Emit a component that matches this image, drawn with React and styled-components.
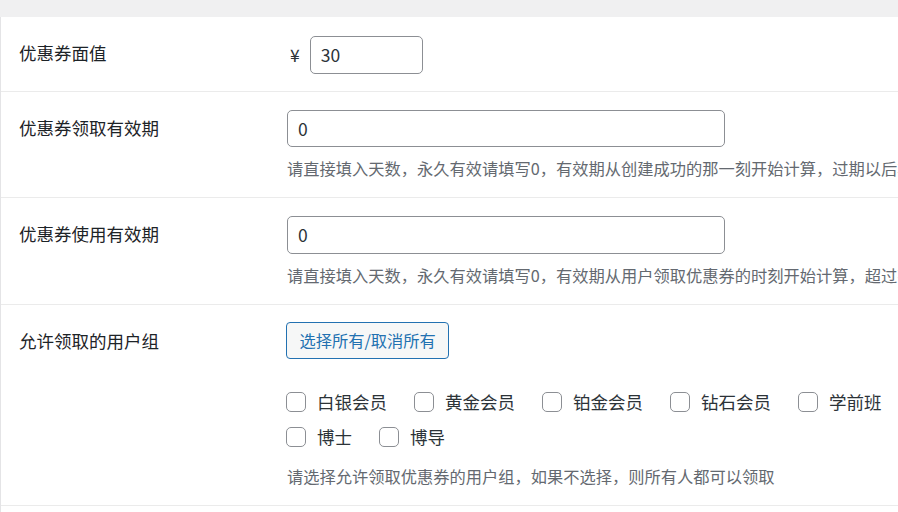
import React from "react";
import styled, { createGlobalStyle } from "styled-components";

const Global = createGlobalStyle`
  html, body {
    margin: 0;
    padding: 0;
    background: #f0f0f1;
    overflow: hidden;
  }
  body {
    font-family: "Noto Sans CJK SC", "Noto Sans", sans-serif;
    color: #1d2327;
  }
`;

const Page = styled.div`
  padding-top: 17px;
  width: 1300px;
`;

const Panel = styled.div`
  background: #fff;
  border-left: 1px solid #e4e4e6;
  padding-bottom: 60px;
`;

const Row = styled.div`
  display: grid;
  grid-template-columns: 286px 1fr;
  border-bottom: 1px solid #ebebeb;
`;

const Label = styled.div`
  padding: 24px 0 0 18px;
  font-size: 17.5px;
  line-height: 24px;
  color: #1d2327;
`;

const Field = styled.div`
  padding: ${(p) => p.$top || 18}px 0 ${(p) => p.$bottom || 17}px 0;
  display: flex;
  flex-direction: column;
  align-items: flex-start;
`;

const Inline = styled.div`
  display: flex;
  align-items: center;
`;

const Currency = styled.span`
  font-size: 17.5px;
  color: #2c3338;
  margin: 0 10px 0 3px;
`;

const TextInput = styled.input`
  box-sizing: border-box;
  width: ${(p) => p.$width}px;
  height: 37.5px;
  border: 1px solid #8c8f94;
  border-radius: 5px;
  padding: 0 10px;
  font-family: "Noto Sans CJK SC", "Noto Sans", sans-serif;
  font-size: 17.5px;
  color: #2c3338;
  background: #fff;
  outline: none;
`;

const Description = styled.p`
  margin: ${(p) => p.$top || 6}px 0 0;
  font-size: 16.25px;
  line-height: 24px;
  color: #646970;
  white-space: nowrap;
`;

const Button = styled.button`
  box-sizing: border-box;
  height: 37.5px;
  padding: 0 12.5px;
  margin-left: -1px;
  border: 1px solid #2271b1;
  border-radius: 4px;
  background: #f6f7f7;
  color: #2271b1;
  font-family: "Noto Sans CJK SC", "Noto Sans", sans-serif;
  font-size: 16.25px;
  line-height: 1;
  cursor: pointer;
`;

const Group = styled.div`
  display: flex;
  flex-wrap: wrap;
  width: 640px;
  margin-top: 33px;
  row-gap: 15px;
`;

const Option = styled.label`
  display: flex;
  align-items: center;
  margin-right: 28px;
  font-size: 17.5px;
  line-height: 20px;
  color: #2c3338;
`;

const Box = styled.input.attrs({ type: "checkbox" })`
  appearance: none;
  box-sizing: border-box;
  width: 20px;
  height: 20px;
  margin: 0 11px 0 -1px;
  border: 1px solid #8c8f94;
  border-radius: 5px;
  background: #fff;
`;

const groups = ["白银会员", "黄金会员", "铂金会员", "钻石会员", "学前班", "博士", "博导"];

export default function App() {
  return (
    <>
      <Global />
      <Page>
        <Panel>
          <Row>
            <Label>优惠券面值</Label>
            <Field $top={19} $bottom={17}>
              <Inline>
                <Currency>¥</Currency>
                <TextInput $width={113} defaultValue="30" />
              </Inline>
            </Field>
          </Row>
          <Row>
            <Label>优惠券领取有效期</Label>
            <Field $top={18} $bottom={17}>
              <TextInput $width={438} defaultValue="0" />
              <Description $top={9}>
                请直接填入天数，永久有效请填写0，有效期从创建成功的那一刻开始计算，过期以后将无法领取该优惠券
              </Description>
            </Field>
          </Row>
          <Row>
            <Label>优惠券使用有效期</Label>
            <Field $top={18} $bottom={17}>
              <TextInput $width={438} defaultValue="0" />
              <Description $top={9}>
                请直接填入天数，永久有效请填写0，有效期从用户领取优惠券的时刻开始计算，超过有效期后优惠券将无法使用
              </Description>
            </Field>
          </Row>
          <Row>
            <Label>允许领取的用户组</Label>
            <Field $top={17} $bottom={17}>
              <Button type="button">选择所有/取消所有</Button>
              <Group>
                {groups.map((g) => (
                  <Option key={g}>
                    <Box />
                    {g}
                  </Option>
                ))}
              </Group>
              <Description $top={17}>
                请选择允许领取优惠券的用户组，如果不选择，则所有人都可以领取
              </Description>
            </Field>
          </Row>
        </Panel>
      </Page>
    </>
  );
}
